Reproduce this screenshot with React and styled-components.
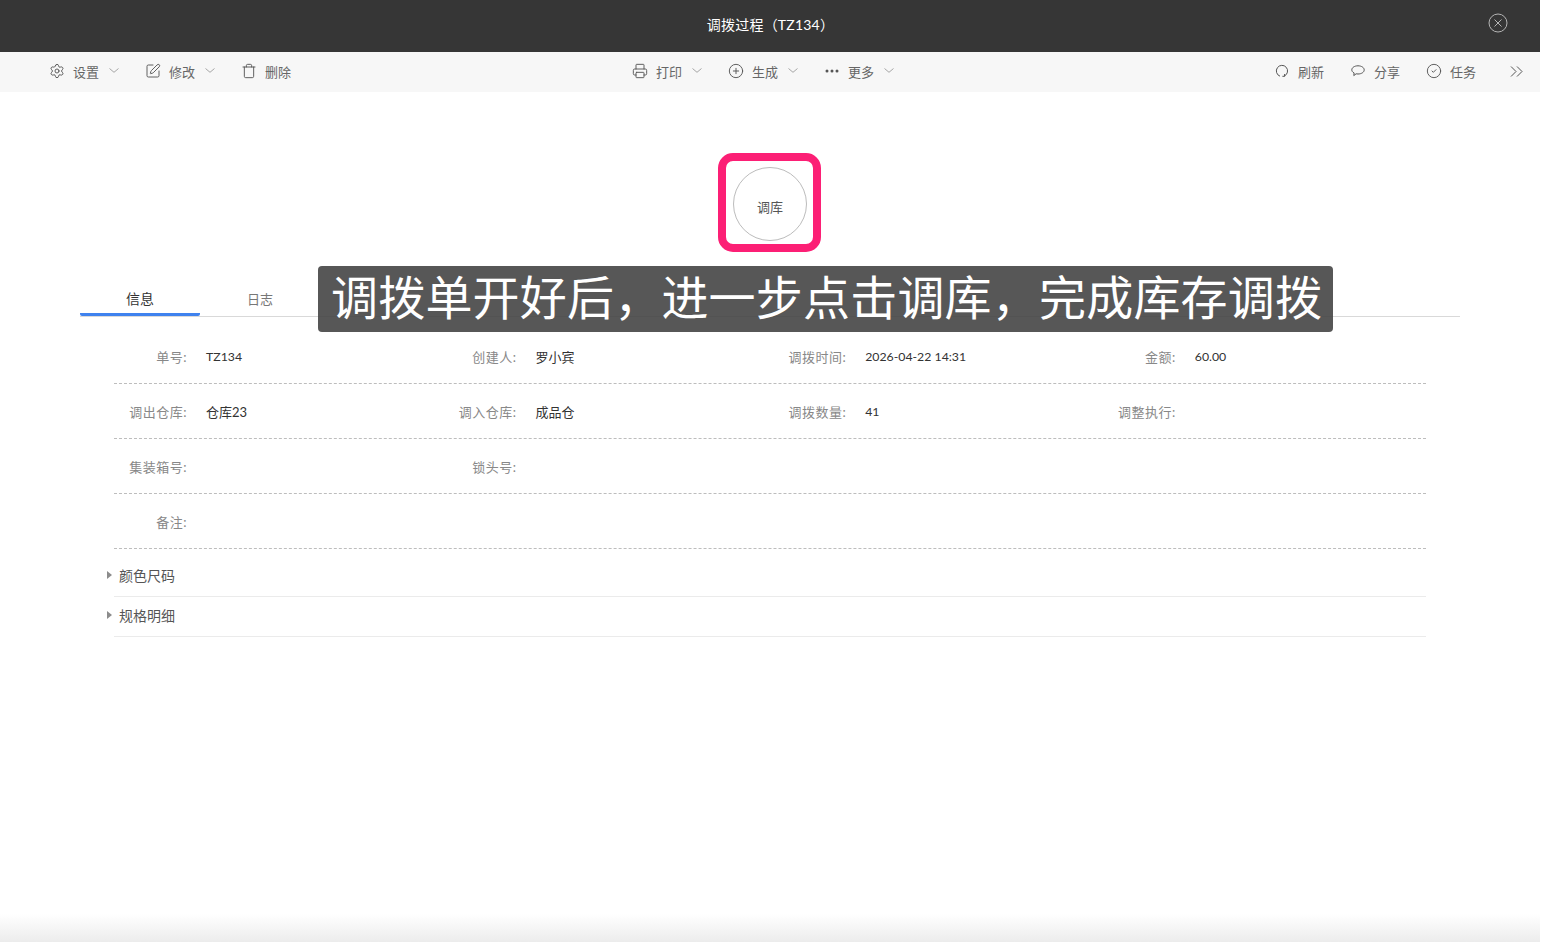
import React from 'react'
import styled, { createGlobalStyle } from 'styled-components'
import { Settings, SquarePen, Trash, Printer, CirclePlus, CircleCheck } from 'lucide-react'

const GlobalStyle = createGlobalStyle`
  html, body {
    margin: 0;
    padding: 0;
    background: #fff;
  }
  body {
    font-family: Lato, "Noto Sans CJK SC", sans-serif;
    font-size: 13px;
    color: #333;
  }
`

const Page = styled.div`
  position: relative;
  display: flex;
  flex-direction: column;
  width: 1540px;
  height: 942px;
  overflow: hidden;
`

const Header = styled.header`
  position: relative;
  display: flex;
  flex: none;
  align-items: center;
  justify-content: center;
  height: 52px;
  padding-left: 1px;
  padding-bottom: 5px;
  box-sizing: border-box;
  background: #363636;
  color: #fff;
  font-size: 14px;
  letter-spacing: 0.2px;
`

const CloseButton = styled.svg`
  position: absolute;
  top: 13px;
  right: 32px;
  width: 20px;
  height: 20px;
  fill: none;
  stroke: #b4b4b4;
  stroke-width: 1;
`

const Toolbar = styled.div`
  display: grid;
  flex: none;
  grid-template-columns: 583px auto 1fr;
  align-items: center;
  height: 40px;
  box-sizing: border-box;
  padding: 0 17px 2px 50px;
  background: #f7f7f7;
  color: #666;
  font-size: 13px;
`

const ToolGroup = styled.div`
  display: flex;
  align-items: center;
  justify-content: ${(p) => (p.$end ? 'flex-end' : 'flex-start')};
`

const ToolItem = styled.div`
  display: flex;
  align-items: center;
  margin-right: ${(p) => p.$gap}px;
  svg {
    flex: none;
  }
`

const ToolIcon = styled.span`
  display: flex;
  align-items: center;
  justify-content: center;
  width: 14px;
  height: 14px;
  margin-right: 9px;
  color: #555;
`

const ToolCaret = styled.svg`
  width: 12px;
  height: 5px;
  margin-left: 9px;
  margin-top: -1px;
  fill: none;
  stroke: #a6a6a6;
  stroke-width: 1;
`

const MoreDots = styled.svg`
  width: 14px;
  height: 14px;
  fill: #555;
`

const Collapse = styled.svg`
  width: 13px;
  height: 13px;
  margin-left: 7px;
  fill: none;
  stroke: #555;
  stroke-width: 1;
`

const Main = styled.main`
  flex: 1;
`

const Process = styled.div`
  position: relative;
  display: flex;
  justify-content: center;
  padding-top: 75px;
`

const Node = styled.div`
  display: flex;
  align-items: center;
  justify-content: center;
  width: 74px;
  height: 74px;
  box-sizing: border-box;
  padding-top: 5px;
  border: 1px solid #bcbcbc;
  border-radius: 50%;
  color: #555;
  font-size: 13px;
`

const Highlight = styled.div`
  position: absolute;
  top: 61px;
  left: 718px;
  width: 103px;
  height: 99px;
  box-sizing: border-box;
  border: 8px solid #fc1f75;
  border-radius: 15px;
`

const Tabs = styled.div`
  display: flex;
  height: 34px;
  margin: 41px 80px 12px;
  border-bottom: 1px solid #d9d9d9;
`

const Tab = styled.div`
  width: 120px;
  height: 34px;
  box-sizing: border-box;
  padding-top: 7px;
  border-bottom: ${(p) => (p.$active ? '3px solid #3f82ee' : 'none')};
  border-radius: 2px;
  color: ${(p) => (p.$active ? '#333' : '#777')};
  font-size: ${(p) => (p.$active ? 14 : 13)}px;
  line-height: 20px;
  text-align: center;
`

const Details = styled.div`
  margin: 0 114px;
`

const FieldRow = styled.div`
  display: grid;
  grid-template-columns: repeat(3, 329.6px) 1fr;
  height: 55px;
  box-sizing: border-box;
  padding-top: 19px;
  border-bottom: 1px dashed #bdbdbd;
  line-height: 18px;
`

const Field = styled.div`
  display: flex;
`

const Label = styled.span`
  flex: none;
  width: 73px;
  color: #888;
  letter-spacing: 0.5px;
  text-align: right;
  white-space: nowrap;
`

const Value = styled.span`
  margin-left: 19px;
  color: #333;
  font-size: ${(p) => (p.$latin ? 12.3 : 13)}px;
`

const Section = styled.div`
  display: flex;
  align-items: center;
  height: 40px;
  box-sizing: border-box;
  padding-bottom: 4px;
  border-bottom: 1px solid #ebebeb;
  color: #555;
  font-size: 14px;
  ${FieldRow} + & {
    height: 48px;
    padding-top: 8px;
  }
`

const SectionCaret = styled.span`
  width: 0;
  height: 0;
  margin: 1px 7px 0 -7px;
  border-top: 4px solid transparent;
  border-bottom: 4px solid transparent;
  border-left: 5px solid #8c8c8c;
`

const BottomFade = styled.div`
  flex: none;
  height: 28px;
  background: linear-gradient(to bottom, rgba(236, 236, 236, 0), #ececec);
`

const Caption = styled.div`
  position: absolute;
  top: 266px;
  left: 318px;
  width: 1015px;
  height: 66px;
  box-sizing: border-box;
  padding-left: 13px;
  border-radius: 4px;
  background: rgba(64, 64, 64, 0.88);
  color: #fff;
  font-size: 47px;
  letter-spacing: 0.2px;
  line-height: 63px;
  white-space: nowrap;
`

const RefreshIcon = () => (
  <svg width="14" height="14" viewBox="0 0 14 14" fill="none" stroke="currentColor" strokeWidth="1">
    <path d="M5 12.200A5.600 5.600 0 1 1 9.400 12" />
    <path d="M9.600 10v2.300H7.400" />
  </svg>
)

const ChatIcon = () => (
  <svg width="14" height="14" viewBox="0 0 14 14" fill="none" stroke="currentColor" strokeWidth="1">
    <path d="M7 1.800c3.500 0 6.200 1.800 6.200 4.100S10.500 10 7 10c-.7 0-1.300-.1-1.900-.2L2.800 11.600l.3-2.700C1.600 8.200.8 7.100.8 5.900.8 3.600 3.500 1.800 7 1.800z" />
  </svg>
)

const leftTools = [
  { icon: <Settings size={16} strokeWidth={1.4} />, text: '设置', caret: true },
  { icon: <SquarePen size={16} strokeWidth={1.4} />, text: '修改', caret: true },
  { icon: <Trash size={16} strokeWidth={1.4} />, text: '删除' },
]

const centerTools = [
  { icon: <Printer size={16} strokeWidth={1.4} />, text: '打印', caret: true },
  { icon: <CirclePlus size={16} strokeWidth={1.4} />, text: '生成', caret: true },
  {
    icon: (
      <MoreDots viewBox="0 0 14 14">
        <circle cx="2" cy="7" r="1.500" />
        <circle cx="7" cy="7" r="1.500" />
        <circle cx="12" cy="7" r="1.500" />
      </MoreDots>
    ),
    text: '更多',
    caret: true,
  },
]

const rightTools = [
  { icon: <RefreshIcon />, text: '刷新' },
  { icon: <ChatIcon />, text: '分享' },
  { icon: <CircleCheck size={16} strokeWidth={1.4} />, text: '任务' },
]

const rows = [
  [
    ['单号:', 'TZ134', true],
    ['创建人:', '罗小宾'],
    ['调拨时间:', '2026-04-22 14:31', true],
    ['金额:', '60.00', true],
  ],
  [
    ['调出仓库:', '仓库23'],
    ['调入仓库:', '成品仓'],
    ['调拨数量:', '41', true],
    ['调整执行:', ''],
  ],
  [
    ['集装箱号:', ''],
    ['锁头号:', ''],
  ],
  [['备注:', '']],
]

const renderTools = (tools, gap) =>
  tools.map((t) => (
    <ToolItem key={t.text} $gap={gap}>
      <ToolIcon>{t.icon}</ToolIcon>
      {t.text}
      {t.caret && (
        <ToolCaret viewBox="0 0 12 5">
          <path d="M1.500.5l4.500 3.800 4.500-3.800" />
        </ToolCaret>
      )}
    </ToolItem>
  ))

const App = () => {
  return (
    <Page>
      <GlobalStyle />
      <Header>
        调拨过程（TZ134）
        <CloseButton viewBox="0 0 20 20">
          <circle cx="10" cy="10" r="9" />
          <path d="M6.500 6.500l7 7M13.500 6.500l-7 7" />
        </CloseButton>
      </Header>
      <Toolbar>
        <ToolGroup>{renderTools(leftTools, 26)}</ToolGroup>
        <ToolGroup>{renderTools(centerTools, 26)}</ToolGroup>
        <ToolGroup $end>
          {renderTools(rightTools, 27)}
          <Collapse viewBox="0 0 13 13">
            <path d="M1 1.500l5 5-5 5M7 1.500l5 5-5 5" />
          </Collapse>
        </ToolGroup>
      </Toolbar>
      <Main>
        <Process>
          <Node>调库</Node>
          <Highlight />
        </Process>
        <Tabs>
          <Tab $active>信息</Tab>
          <Tab>日志</Tab>
        </Tabs>
        <Details>
          {rows.map((row, i) => (
            <FieldRow key={i}>
              {row.map(([label, value, latin]) => (
                <Field key={label}>
                  <Label>{label}</Label>
                  <Value $latin={latin}>{value}</Value>
                </Field>
              ))}
            </FieldRow>
          ))}
          <Section>
            <SectionCaret />
            颜色尺码
          </Section>
          <Section>
            <SectionCaret />
            规格明细
          </Section>
        </Details>
      </Main>
      <BottomFade />
      <Caption>调拨单开好后，进一步点击调库，完成库存调拨</Caption>
    </Page>
  )
}

export default App
